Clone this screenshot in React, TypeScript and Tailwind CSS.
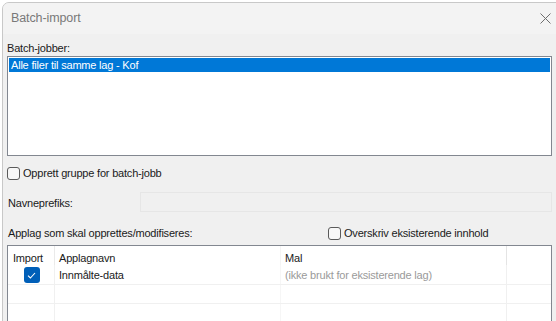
import React from "react";

const font = { fontFamily: '"Liberation Sans", Arial, sans-serif', letterSpacing: "-0.2px" };

function Box({ checked = false }: { checked?: boolean }) {
  if (checked) {
    return (
      <div className="w-[16px] h-[16px] rounded-[3px] bg-[#005fb8] flex items-center justify-center">
        <svg width="9" height="7" viewBox="0 0 9 7">
          <path d="M1 3.6 L3.4 6 L8 1" stroke="white" strokeWidth="1.1" fill="none" />
        </svg>
      </div>
    );
  }
  return <div className="w-[13px] h-[13px] rounded-[3px] border border-[#5a5a5a] bg-[#f7f7f7]" />;
}

export default function App() {
  return (
    <div className="w-[556px] h-[321px] overflow-hidden bg-white text-[11px] text-[#1a1a1a]" style={font}>
      <div className="ml-[2px] mt-[2px] w-[570px] h-[330px] border border-[#c8c8c8] rounded-tl-[7px] bg-[#f0f0f0] overflow-hidden">
        <div className="h-[31px] bg-[#f3f3f3] flex items-center justify-between pl-[8px] pr-[20px]">
          <span className="text-[12.5px] text-[#797979] tracking-[-0.1px]">Batch-import</span>
          <svg width="11" height="11" viewBox="0 0 11 11" className="mr-[0px]">
            <path d="M0.5 0.5 L10.5 10.5 M10.5 0.5 L0.5 10.5" stroke="#6e6e6e" strokeWidth="1" />
          </svg>
        </div>
        <div className="pl-[4px] w-[549px]">
          <div className="h-[22px] pt-[7px] leading-[14px]">Batch-jobber:</div>
          <div className="h-[100px] border border-[#828790] bg-white p-[1px]">
            <div className="h-[14px] bg-[#0078d7] text-white leading-[14px] pl-[2px]">Alle filer til samme lag - Kof</div>
          </div>
          <div className="h-[31px] flex items-center gap-[3px] pt-[4px]">
            <Box />
            <span className="leading-[14px] pb-[1px]">Opprett gruppe for batch-jobb</span>
          </div>
          <div className="h-[20px] mt-[5px] flex items-center">
            <span className="w-[133px] pl-[1px] pt-[2px]">Navneprefiks:</span>
            <div className="flex-1 h-[20px] border border-[#e6e6e6] bg-[#f0f0f0]" />
          </div>
          <div className="h-[33px] flex items-end pb-[4px]">
            <span className="w-[321px] pl-[1px] leading-[14px] pb-[1px]">Applag som skal opprettes/modifiseres:</span>
            <div className="flex items-center gap-[3px]">
              <Box />
              <span className="leading-[14px] pb-[1px]">Overskriv eksisterende innhold</span>
            </div>
          </div>
          <div className="h-[90px] border border-[#828790] bg-white">
            <div className="flex h-[19px]">
              <div className="w-[47px] pl-[5px] pt-[4px] border-r border-[#eaeaea]">Import</div>
              <div className="w-[226px] pl-[4px] pt-[4px] border-r border-[#f4f4f4]">Applagnavn</div>
              <div className="w-[226px] pl-[4px] pt-[4px] border-r border-[#e4e4e4]">Mal</div>
              <div className="flex-1" />
            </div>
            <div className="flex h-[20px] border-b border-[#f0f0f0]">
              <div className="w-[47px] flex justify-center items-start pt-[2px] pl-[1px] border-r border-[#f0f0f0]">
                <Box checked />
              </div>
              <div className="w-[226px] pl-[4px] pt-[2px] border-r border-[#f6f6f6]">Innmålte-data</div>
              <div className="w-[226px] pl-[4px] pt-[2px] text-[#9a9a9a] border-r border-[#f0f0f0]">(ikke brukt for eksisterende lag)</div>
              <div className="flex-1" />
            </div>
            <div className="flex h-[19px] border-b border-[#f0f0f0]">
              <div className="w-[47px] border-r border-[#f0f0f0]" />
              <div className="w-[226px] border-r border-[#f6f6f6]" />
              <div className="w-[226px] border-r border-[#f0f0f0]" />
              <div className="flex-1" />
            </div>
            <div className="flex h-[19px]">
              <div className="w-[47px] border-r border-[#f0f0f0]" />
              <div className="w-[226px] border-r border-[#f6f6f6]" />
              <div className="w-[226px] border-r border-[#f0f0f0]" />
              <div className="flex-1" />
            </div>
          </div>
        </div>
      </div>
    </div>
  );
}
